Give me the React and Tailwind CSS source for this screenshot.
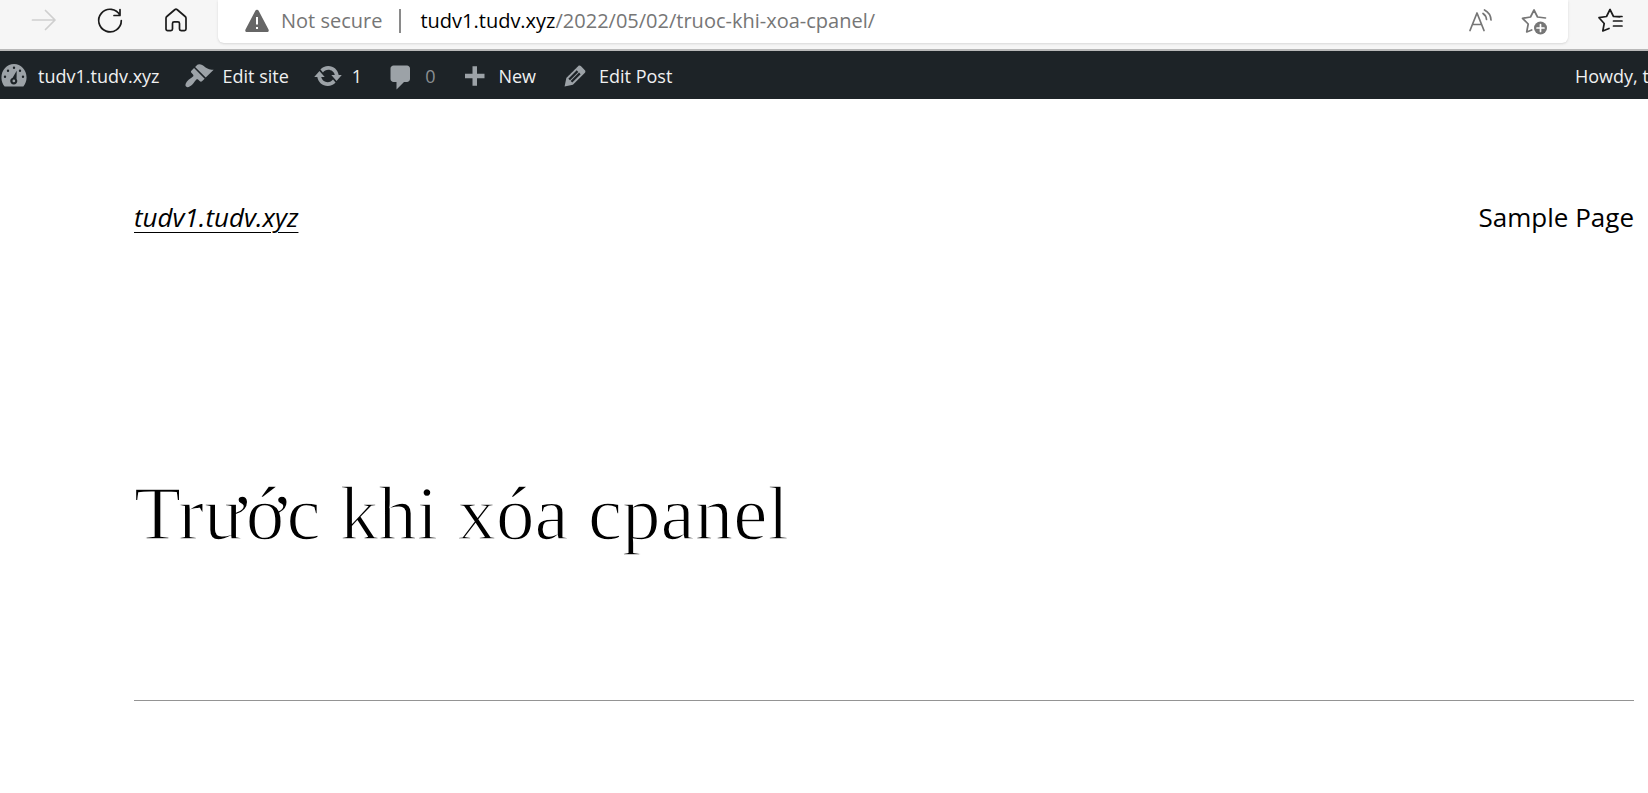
import React from "react";

const barIcons = {
  dashboard:
    "M3.76 17h12.48c1.34-1.64 2.14-3.74 2.14-6.02C18.38 5.95 14.63 2 10 2s-8.38 4.07-8.38 9.1c0 2.28.8 4.26 2.14 5.9zM9.2 4.500a.8.8 0 1 1 1.600 0 .8.8 0 1 1-1.600 0zM5.200 6.500a.8.8 0 1 1 1.600 0 .8.8 0 1 1-1.600 0zM9.900 15.600c-1.400 0-2.400-1-2.400-2.300 0-1 .7-1.800 1.600-2.100l2.700-4.700-.1 5.500c.3.4.5.8.5 1.300 0 1.300-1 2.300-2.300 2.300zM3.200 10.500a.8.8 0 1 1 1.600 0 .8.8 0 1 1-1.600 0zM15.200 10.500a.8.8 0 1 1 1.600 0 .8.8 0 1 1-1.600 0zM13.200 6.500a.8.8 0 1 1 1.600 0 .8.8 0 1 1-1.600 0zM9.900 12.400a.9.9 0 1 0 0 1.800.9.9 0 1 0 0-1.800z",
  brush:
    "M14.48 11.06L7.41 3.99l1.5-1.5c.5-.56 2.3-.47 3.51.32 1.21.8 1.43 1.28 2.91 2.1 1.18.64 2.45 1.26 4.45.85zm-.71.71L6.7 4.7 4.93 6.47c-.39.39-.39 1.02 0 1.41l1.06 1.06c.39.39.39 1.03 0 1.42-.6.6-1.43 1.11-2.21 1.69-.35.26-.7.53-1.01.84C1.43 14.23.4 16.08 1.4 17.07c.99 1 2.84-.03 4.18-1.36.31-.31.58-.66.85-1.02.57-.78 1.08-1.61 1.69-2.21.39-.39 1.02-.39 1.41 0l1.06 1.06c.39.39 1.02.39 1.41 0z",
  update:
    "M10.2 3.28c3.53 0 6.43 2.61 6.92 6h2.08l-3.5 4-3.5-4h2.32c-.45-1.97-2.21-3.45-4.32-3.45-1.45 0-2.73.71-3.54 1.78L4.95 5.66C6.23 4.2 8.11 3.28 10.2 3.28zm-.4 13.44c-3.52 0-6.43-2.61-6.92-6H.8l3.5-4c1.17 1.33 2.33 2.67 3.5 4H5.48c.45 1.97 2.21 3.45 4.32 3.45 1.45 0 2.73-.71 3.54-1.78l1.71 1.95c-1.28 1.46-3.15 2.38-5.25 2.38z",
  comment:
    "M5 3h9c1.1 0 2 .9 2 2v7c0 1.1-.9 2-2 2h-2l-5 5v-5H5c-1.100 0-2-.9-2-2V5c0-1.100.9-2 2-2z",
  plus: "M17 8.500v3h-5v5H9v-5H4v-3h5v-5h3v5h5z",
  edit: "M13.89 3.39l2.71 2.72c.46.46.42 1.24.03 1.64l-8.01 8.02-5.56 1.16 1.16-5.58s7.6-7.63 7.99-8.03c.39-.39 1.22-.39 1.68.07zm-2.73 2.79l-5.59 5.61 1.11 1.11 5.54-5.65zm-2.97 8.23l5.58-5.6-1.07-1.08-5.59 5.6z",
};

const barItems = [
  { icon: "dashboard", text: "tudv1.tudv.xyz", label: "tudv1.tudv.xyz" },
  { icon: "brush", text: "Edit site", label: "Edit site" },
  { icon: "update", text: "1", label: "1 update available" },
  { icon: "comment", text: "0", label: "0 comments", muted: true },
  { icon: "plus", text: "New", label: "New" },
  { icon: "edit", text: "Edit Post", label: "Edit Post" },
];

function Stroke({ children }) {
  return (
    <svg
      viewBox="0 0 28 28"
      className="size-7"
      fill="none"
      stroke="currentColor"
      strokeWidth="1.7"
      strokeLinecap="round"
      strokeLinejoin="round"
      aria-hidden="true"
    >
      {children}
    </svg>
  );
}

function BrowserBar() {
  return (
    <div className="flex h-[51px] items-start border-b-2 border-[#b9b9b9] bg-[#f6f6f6]">
      <div className="flex w-[218px] shrink-0 items-center gap-[38px] pt-[7px] pl-[30px]">
        <button type="button" aria-label="Forward" disabled className="text-[#cfcfcf]">
          <Stroke>
            <path d="M2.500 13H25M15.500 3.500 25 13l-9.500 9.500" />
          </Stroke>
        </button>
        <button type="button" aria-label="Refresh" className="text-[#1b1b1b]">
          <Stroke>
            <path d="M24 8.300A11.300 11.300 0 1 0 25.300 13.500M24 2.500v6h-6" />
          </Stroke>
        </button>
        <button type="button" aria-label="Home" className="text-[#1b1b1b]">
          <Stroke>
            <path d="M4 11.200c0-.7.300-1.300.8-1.700l8.200-7a1.500 1.500 0 0 1 2 0l8.200 7c.5.4.8 1 .8 1.700V22c0 .9-.7 1.600-1.600 1.600h-3.300c-.9 0-1.600-.7-1.600-1.600v-5.500c0-.9-.7-1.600-1.600-1.600h-3.800c-.9 0-1.600.7-1.600 1.600V22c0 .9-.7 1.600-1.600 1.600H5.600C4.700 23.600 4 22.900 4 22z" />
          </Stroke>
        </button>
      </div>
      <div className="flex h-[43px] min-w-0 grow items-center rounded-b-md bg-white pr-[20px] pb-0.5 pl-[26px] text-xl text-[#767676] shadow-sm">
        <svg viewBox="0 0 26 26" className="size-[26px] shrink-0" aria-hidden="true">
          <path
            d="M11.200 3a2 2 0 0 1 3.600 0l9.700 18.500c.7 1.300-.2 2.500-1.600 2.500H3.100c-1.400 0-2.300-1.200-1.600-2.500z"
            fill="#666"
          />
          <path d="M13 9v7.500M13 19v2" stroke="#fff" strokeWidth="2" />
        </svg>
        <button type="button" className="ml-[11px] whitespace-nowrap">Not secure</button>
        <span className="mr-[19px] ml-[17px] h-6 w-[2px] bg-[#8a8a8a]" />
        <a href="#url" className="grow truncate">
          <span className="text-black">tudv1.tudv.xyz</span>/2022/05/02/truoc-khi-xoa-cpanel/
        </a>
        <button type="button" aria-label="Read aloud" className="mr-[26px]">
          <Stroke>
            <path d="M4 23.500 11 6l7 17.500M6.500 17.500h9M17 6.500a8 8 0 0 1 3.500 6M18.500 3a12 12 0 0 1 6.500 10" />
          </Stroke>
        </button>
        <button type="button" aria-label="Add to favorites">
          <Stroke>
            <path d="M25.500 11 17.500 10 14 3 10.500 10l-8 1.300 5.700 5.700-1.500 8 5-2" />
            <circle cx="20.500" cy="21" r="6.500" fill="currentColor" stroke="none" />
            <path d="M20.500 17.500v7M17 21h7" stroke="#fff" />
          </Stroke>
        </button>
      </div>
      <button type="button" aria-label="Favorites" className="mr-[24px] ml-[28px] pt-[7px] text-[#1b1b1b]">
        <Stroke>
          <path d="M24 9.800 17.500 9.500 14 2.500 10.500 9.500 3 10.700l5.200 5.800L6.800 24l6.200-2.500M17.500 14H26M17.500 19H26M17.500 9.500H26" />
        </Stroke>
      </button>
    </div>
  );
}

function AdminBar() {
  return (
    <nav
      aria-label="Admin toolbar"
      className="flex h-12 items-center justify-between overflow-hidden bg-[#1d2327] pt-0.5 text-lg text-[#f0f0f1]"
    >
      <ul className="-ml-px flex gap-6">
        {barItems.map((item) => (
          <li key={item.icon}>
            <a href="#admin" aria-label={item.label} className="flex items-center gap-[9px] whitespace-nowrap">
              <svg viewBox="0 0 20 20" className="size-[30px] shrink-0 fill-[#9ca2a7]" aria-hidden="true">
                <path d={barIcons[item.icon]} fillRule="evenodd" />
              </svg>
              <span className={item.muted ? "text-[#8b8f92]" : ""}>{item.text}</span>
            </a>
          </li>
        ))}
      </ul>
      <a href="#profile" className="w-[73px] overflow-hidden whitespace-nowrap">
        Howdy, t
      </a>
    </nav>
  );
}

export default function App() {
  return (
    <div className="min-h-screen overflow-hidden bg-white font-['Open_Sans','Noto_Sans',sans-serif] text-black">
      <BrowserBar />
      <AdminBar />
      <div className="pr-[14px] pl-[134px]">
        <header className="flex items-center justify-between pt-[100px] text-[26px] leading-9">
          <a href="#home" className="italic underline decoration-1 underline-offset-[5px]">
            tudv1.tudv.xyz
          </a>
          <a href="#sample">Sample Page</a>
        </header>
        <main className="border-b border-[#949494] pt-[224px] pb-[133px]">
          <h1 className="font-['Liberation_Serif',serif] text-[77px] leading-[108px] [-webkit-text-stroke:1.5px_white]">
            Trước khi xóa cpanel
          </h1>
        </main>
      </div>
    </div>
  );
}
